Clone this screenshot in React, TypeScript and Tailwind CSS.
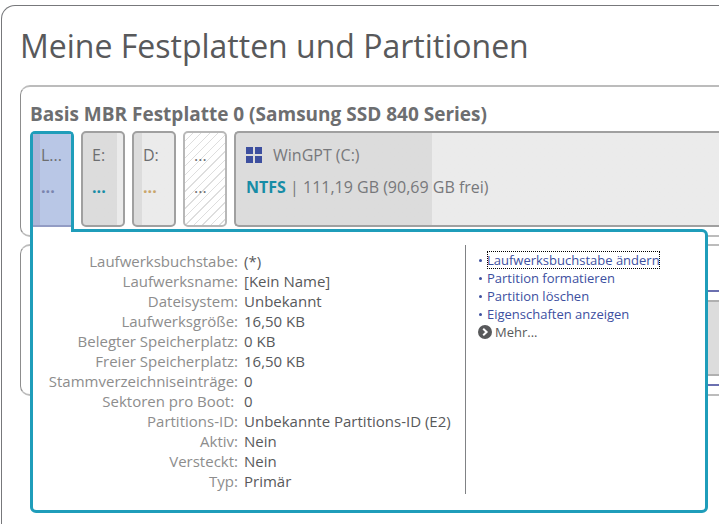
import React from 'react';

interface PartitionTileProps {
  letter: string;
  dotsClass: string;
  fillClass: string;
}

const details = [
  { label: 'Laufwerksbuchstabe:', value: '(*)' },
  { label: 'Laufwerksname:', value: '[Kein Name]' },
  { label: 'Dateisystem:', value: 'Unbekannt' },
  { label: 'Laufwerksgröße:', value: '16,50 KB' },
  { label: 'Belegter Speicherplatz:', value: '0 KB' },
  { label: 'Freier Speicherplatz:', value: '16,50 KB' },
  { label: 'Stammverzeichniseinträge:', value: '0' },
  { label: 'Sektoren pro Boot: ', value: '0' },
  { label: 'Partitions-ID:', value: 'Unbekannte Partitions-ID (E2)' },
  { label: 'Aktiv:', value: 'Nein' },
  { label: 'Versteckt:', value: 'Nein' },
  { label: 'Typ:', value: 'Primär' },
];

const actions = [
  'Laufwerksbuchstabe ändern',
  'Partition formatieren',
  'Partition löschen',
  'Eigenschaften anzeigen',
];

const PartitionTile: React.FC<PartitionTileProps> = ({ letter, dotsClass, fillClass }) => (
  <button
    type="button"
    className={`flex h-24 w-11 shrink-0 flex-col gap-2 rounded-[5px] border-2 px-[9px] pt-2.5 text-left text-base leading-6 text-[#6d6e70] ${fillClass}`}
  >
    <span>{letter}</span>
    <span className={dotsClass}>...</span>
  </button>
);

const SelectedTile: React.FC = () => (
  <button
    type="button"
    className="z-20 -mb-[5px] flex h-[101px] w-11 shrink-0 flex-col justify-start rounded-t-[5px] border-x-3 border-t-3 border-[#1f9dba] bg-white text-left text-base leading-6 text-[#6d6e70]"
  >
    <span className="flex h-[93px] w-full flex-col gap-2 border-b-2 border-[#929cc4] bg-linear-to-r from-[#adb6d9] from-[7px] to-[#b9c7e6] to-[7px] px-2 pt-[9px]">
      <span>L...</span>
      <span className="font-bold text-[#7a84ae]">...</span>
    </span>
  </button>
);

const WindowsLogo: React.FC = () => (
  <svg width="16" height="16" viewBox="0 0 16 16" fill="#3d4f9f" aria-hidden="true">
    <path d="M0 0h7v7H0zM9 0h7v7H9zM0 9h7v7H0zM9 9h7v7H9z" />
  </svg>
);

const DetailsPopup: React.FC = () => (
  <div className="absolute top-[98px] right-[11px] left-0 z-10 flex rounded-r-[6px] rounded-bl-[6px] border-3 border-[#1f9dba] bg-white pt-[13px] pb-4">
    <div className="w-[433px] shrink-0 border-r border-[#808285] pt-1.5 pb-[3px]">
      <table className="w-full text-[15px] leading-5">
        <tbody>
          {details.map(({ label, value }) => (
            <tr key={label}>
              <th scope="row" className="w-[205px] p-0 text-right font-normal whitespace-pre text-[#8d8d8d]">
                {label}
              </th>
              <td className="p-0 pl-1.5 text-[#58595b]">{value}</td>
            </tr>
          ))}
        </tbody>
      </table>
    </div>
    <div className="pt-1.5 pl-3 text-[13px] leading-[18px]">
      <ul>
        {actions.map((action, index) => (
          <li key={action} className="flex items-center gap-[5px] pl-px text-[#3d4f9f]">
            <span className="size-[3px] rounded-full bg-[#3d4f9f]" />
            <a href="#" className={index === 0 ? 'outline-1 -outline-offset-1 outline-dotted outline-black' : ''}>
              {action}
            </a>
          </li>
        ))}
      </ul>
      <button type="button" className="flex items-center gap-[3px] text-[#58595b]">
        <svg width="14" height="14" viewBox="0 0 14 14" aria-hidden="true">
          <circle cx="7" cy="7" r="7" fill="#58595b" />
          <path d="M5.2 3.8 8.6 7l-3.4 3.2" fill="none" stroke="#fff" strokeWidth="2" />
        </svg>
        Mehr...
      </button>
    </div>
  </div>
);

export default function App() {
  return (
    <div className="h-screen overflow-hidden bg-white pt-[5px] pl-px font-['Open_Sans','Noto_Sans',sans-serif]">
      <main className="h-full rounded-tl-[14px] border-t border-l border-[#77787b] pt-5 pl-[18px]">
        <h1 className="text-[32px] leading-10 text-[#58595b]">Meine Festplatten und Partitionen</h1>

        <section className="mt-[19px] rounded-l-[10px] border-y-2 border-l border-[#bcbcbc] border-l-[#8d8d8d] pb-2 pl-[9px]">
          <h2 className="pt-[15px] pb-[5px] text-[19px] leading-6 font-bold text-[#6d6e70]">
            Basis MBR Festplatte 0 (Samsung SSD 840 Series)
          </h2>
          <div className="relative flex gap-[7px]">
            <SelectedTile />
            <PartitionTile
              letter="E:"
              dotsClass="font-bold text-[#178ca6]"
              fillClass="border-[#a0a0a0] bg-linear-to-r from-[#dcdcdc] from-[34px] to-[#ebebeb] to-[34px]"
            />
            <PartitionTile
              letter="D:"
              dotsClass="font-bold text-[#c9a66b]"
              fillClass="border-[#a0a0a0] bg-linear-to-r from-[#dcdcdc] from-[8px] to-[#ebebeb] to-[8px]"
            />
            <PartitionTile
              letter="..."
              dotsClass=""
              fillClass="border-[#b8b8b8] bg-[repeating-linear-gradient(135deg,#fff_0px,#fff_5px,#dedede_5px,#dedede_6px)]"
            />
            <button
              type="button"
              className="flex h-24 grow flex-col gap-2 rounded-l-[5px] border-y-2 border-l-2 border-[#a0a0a0] bg-linear-to-r from-[#dcdcdc] from-[196px] to-[#ebebeb] to-[196px] px-2.5 pt-2.5 text-left text-base leading-6 text-[#77787b]"
            >
              <span className="flex items-center gap-[11px]">
                <WindowsLogo />
                WinGPT (C:)
              </span>
              <span>
                <b className="text-[#178ca6]">NTFS</b> | 111,19 GB (90,69 GB frei)
              </span>
            </button>
            <DetailsPopup />
          </div>
        </section>

        <section className="mt-[7px] rounded-l-[10px] border-y-2 border-l border-[#bcbcbc] border-l-[#8d8d8d] pt-11 pb-2 pl-[9px]">
          <div className="border-y-2 border-[#6b70b0] py-2">
            <div className="h-[76px] border-y-2 border-[#b0b0b0] bg-[#dcdcdc]" />
          </div>
        </section>
      </main>
    </div>
  );
}
